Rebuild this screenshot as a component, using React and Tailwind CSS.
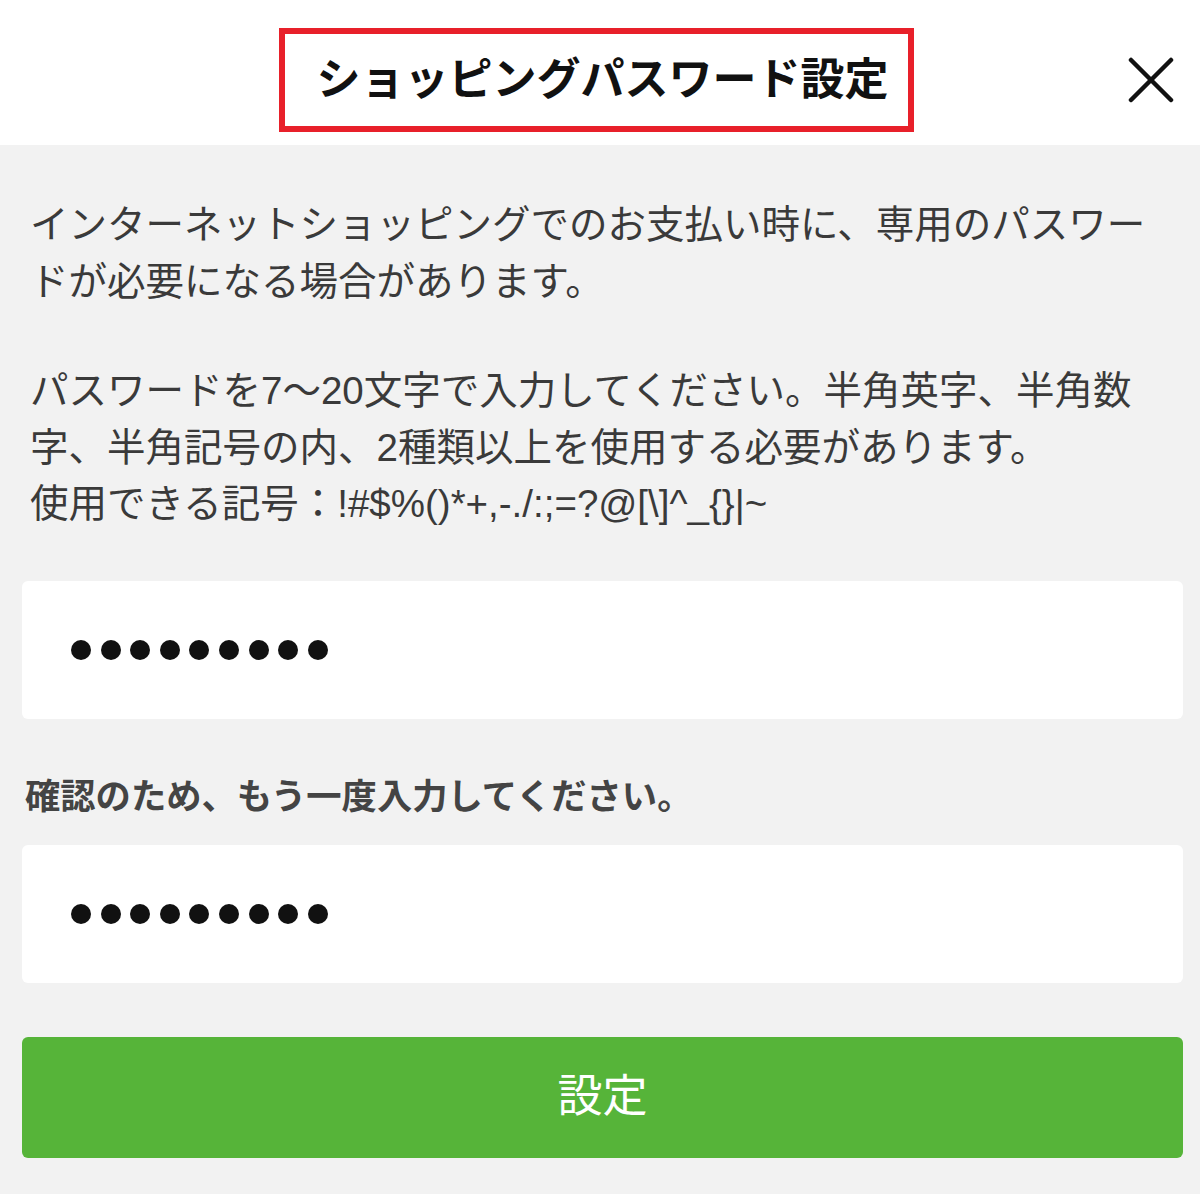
const font = { fontFamily: '"Liberation Sans", "Noto Sans CJK JP", sans-serif' }

function Dots({ count = 9 }) {
  return (
    <div className="flex items-center gap-[9.6px]">
      {Array(count).fill(0).map((_, i) => (
        <span key={i} className="block w-[20px] h-[20px] rounded-full bg-[#111111]" />
      ))}
    </div>
  )
}

function PasswordField() {
  return (
    <div className="h-[138px] bg-white rounded-[6px] flex items-center pl-[49px]">
      <Dots />
    </div>
  )
}

export default function App() {
  return (
    <div className="w-[1200px] h-[1194px] bg-[#f2f2f2] text-[#333333]" style={font}>
      {/* Header */}
      <header className="h-[145px] bg-white grid grid-cols-[1fr_auto_1fr] items-start pt-[28px]">
        <div />
        <div className="border-[6px] border-[#e8202a] h-[104px] pl-[32px] pr-[19px] flex items-center mr-[8px]">
          <h1 className="text-[44px] font-bold text-[#111111] whitespace-nowrap leading-none">
            ショッピングパスワード設定
          </h1>
        </div>
        <div className="flex justify-end pr-[26px] pt-[29px]">
          <button aria-label="閉じる" className="w-[46px] h-[46px] flex items-center justify-center">
            <svg width="46" height="46" viewBox="0 0 46 46" fill="none" stroke="#111111" strokeWidth="4.5" strokeLinecap="round">
              <path d="M3 3 L43 43" />
              <path d="M43 3 L3 43" />
            </svg>
          </button>
        </div>
      </header>

      {/* Body */}
      <main className="pt-[52px] pl-[22px] pr-[17px]">
        <div className="pl-[8px] text-[38.5px] leading-[56.5px] text-[#3a3a3a]">
          <p>
            <span className="block whitespace-nowrap">インターネットショッピングでのお支払い時に、専用のパスワー</span>
            <span className="block whitespace-nowrap">ドが必要になる場合があります。</span>
          </p>
          <p className="mt-[53px]">
            <span className="block whitespace-nowrap">パスワードを7〜20文字で入力してください。半角英字、半角数</span>
            <span className="block whitespace-nowrap">字、半角記号の内、2種類以上を使用する必要があります。</span>
            <span className="block whitespace-nowrap">使用できる記号：!#$%()*+,-./:;=?@[\]^_{'{}'}|~</span>
          </p>
        </div>

        <div className="mt-[48px]">
          <PasswordField />
        </div>

        <p className="mt-[54px] pl-[3px] text-[35.3px] leading-[48px] font-bold text-[#444444] whitespace-nowrap">
          確認のため、もう一度入力してください。
        </p>

        <div className="mt-[24px]">
          <PasswordField />
        </div>

        <button className="mt-[54px] w-full h-[121px] rounded-[6px] bg-[#56b439] text-white text-[45px] flex items-center justify-center">
          設定
        </button>
      </main>
    </div>
  )
}
